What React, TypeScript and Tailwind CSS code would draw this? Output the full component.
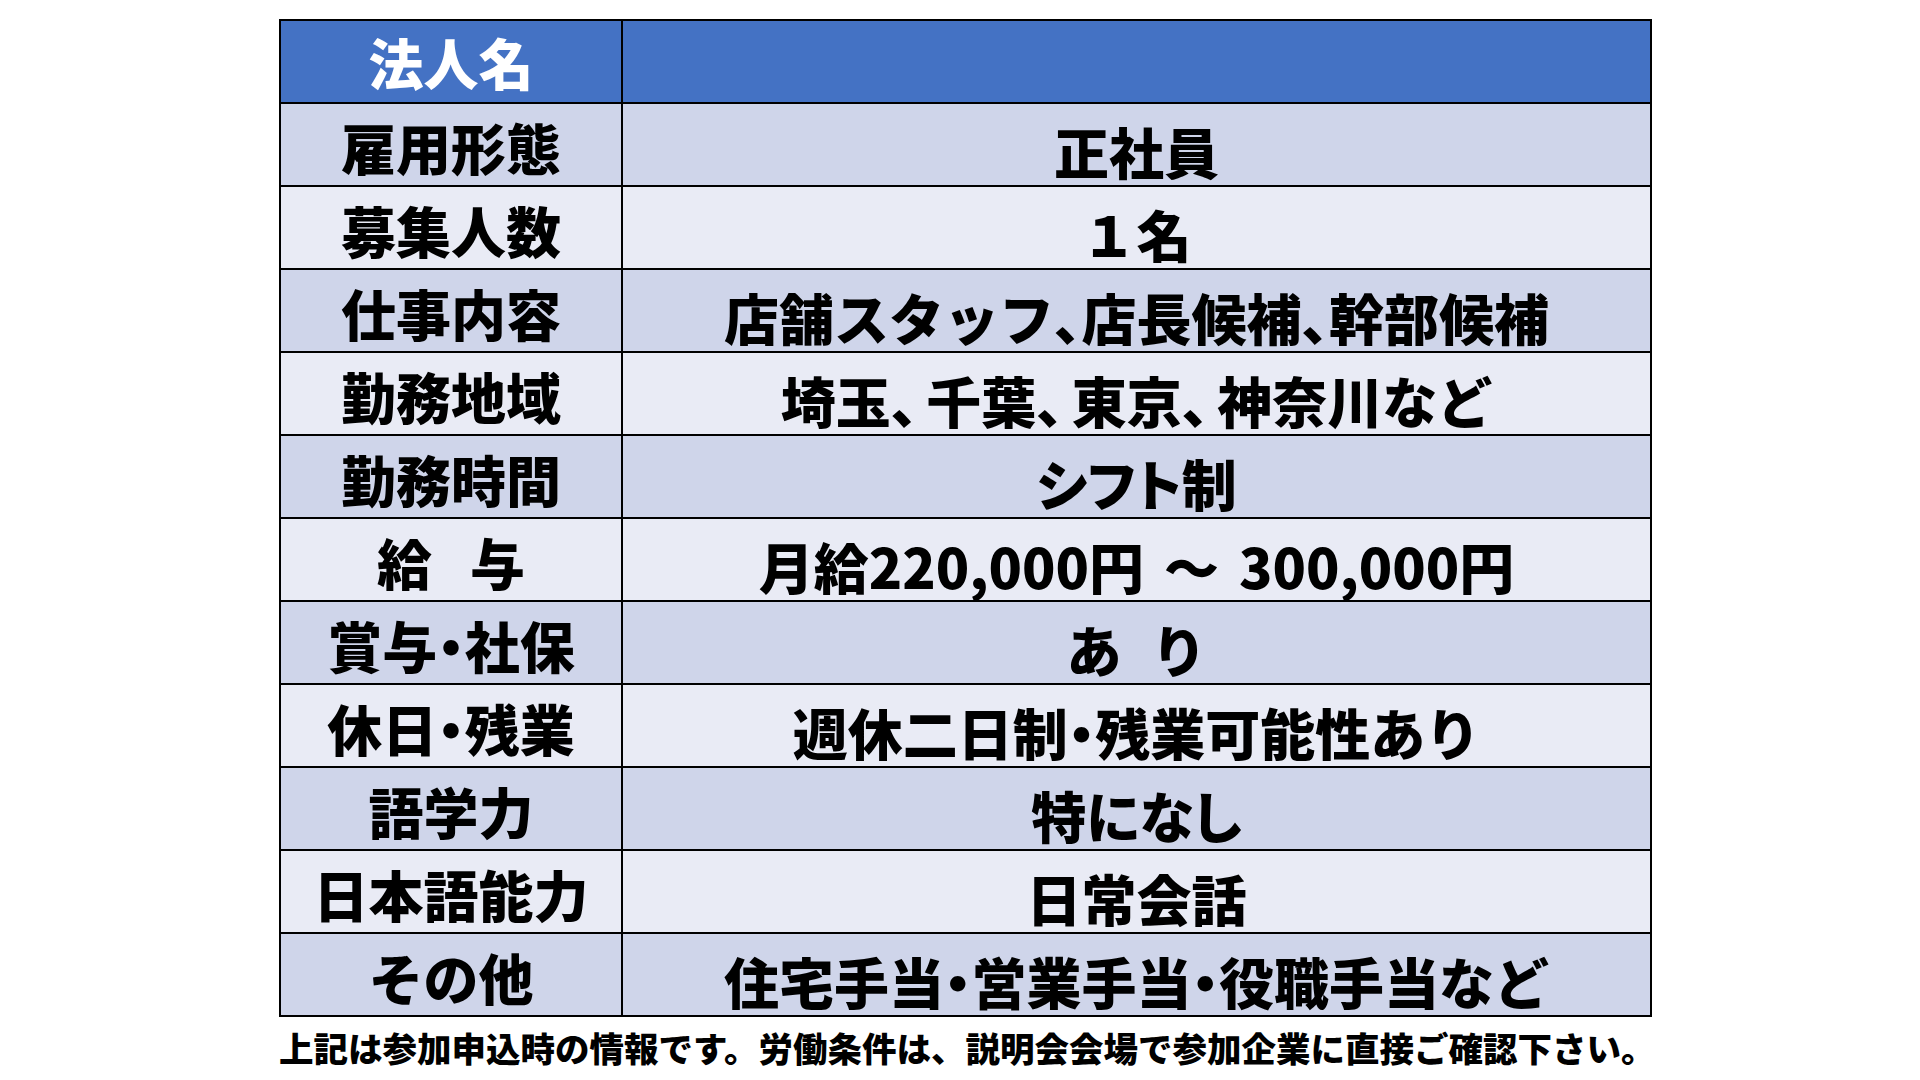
import React from 'react';

type Row = { label: React.ReactNode; value: React.ReactNode };

// the source font sets ・ and 、 proportionally
const P = ({ children, className = '' }: { children: React.ReactNode; className?: string }) => (
  <span className={"[font-feature-settings:'palt'] " + className}>{children}</span>
);

const rows: Row[] = [
  { label: '雇用形態', value: '正社員' },
  { label: '募集人数', value: '１名' },
  {
    label: '仕事内容',
    value: (
      <>
        店舗スタッフ<P>、</P>店長候補<P>、</P>幹部候補
      </>
    ),
  },
  {
    label: '勤務地域',
    value: (
      <>
        埼玉<P className="mr-[8px]">、</P>千葉<P className="mr-[8px]">、</P>東京
        <P className="mr-[8px]">、</P>神奈川など
      </>
    ),
  },
  { label: '勤務時間', value: <P>シフト制</P> },
  {
    label: (
      <>
        給<span className="inline-block w-[38px]" />与
      </>
    ),
    value: (
      <>
        月給220,000円<span className="mx-[20px]">～</span>300,000円
      </>
    ),
  },
  {
    label: (
      <>
        賞与<P>・</P>社保
      </>
    ),
    value: (
      <>
        あ<span className="inline-block w-[30px]" />り
      </>
    ),
  },
  {
    label: (
      <>
        休日<P>・</P>残業
      </>
    ),
    value: (
      <>
        週休二日制<P>・</P>残業可能性あり
      </>
    ),
  },
  { label: '語学力', value: <P>特になし</P> },
  { label: '日本語能力', value: '日常会話' },
  {
    label: 'その他',
    value: (
      <>
        住宅手当<P>・</P>営業手当<P>・</P>役職手当など
      </>
    ),
  },
];

export default function App() {
  return (
    <div className="w-[1920px] h-[1080px] bg-white pl-[279px] pt-[19px] font-['Noto_Sans_CJK_JP',sans-serif] font-black text-black">
      <div className="w-[1373px] border-2 border-black">
        {/* Header */}
        <div className="flex h-[83px] border-b-2 border-black bg-[#4472c4]">
          <div className="w-[342px] border-r-2 border-black flex items-center justify-center text-[55px] leading-none text-white">
            法人名
          </div>
          <div className="flex-1" />
        </div>

        {rows.map((row, idx) => {
          const last = idx === rows.length - 1;
          return (
            <div
              key={idx}
              className={
                'flex border-black ' +
                (last ? 'h-[81px] ' : 'h-[83px] border-b-2 ') +
                (idx % 2 === 0 ? 'bg-[#cfd5ea]' : 'bg-[#e9ebf5]')
              }
            >
              <div className="w-[342px] border-r-2 border-black flex items-center justify-center pt-[3px] text-[55px] leading-none whitespace-nowrap">
                {row.label}
              </div>
              <div className="flex-1 flex items-center justify-center pt-[12px] text-[55px] leading-none whitespace-nowrap">
                {row.value}
              </div>
            </div>
          );
        })}
      </div>

      <p className="mt-[13px] text-[34.5px] leading-none whitespace-nowrap">
        上記は参加申込時の情報です。労働条件は、説明会会場で参加企業に直接ご確認下さい。
      </p>
    </div>
  );
}
